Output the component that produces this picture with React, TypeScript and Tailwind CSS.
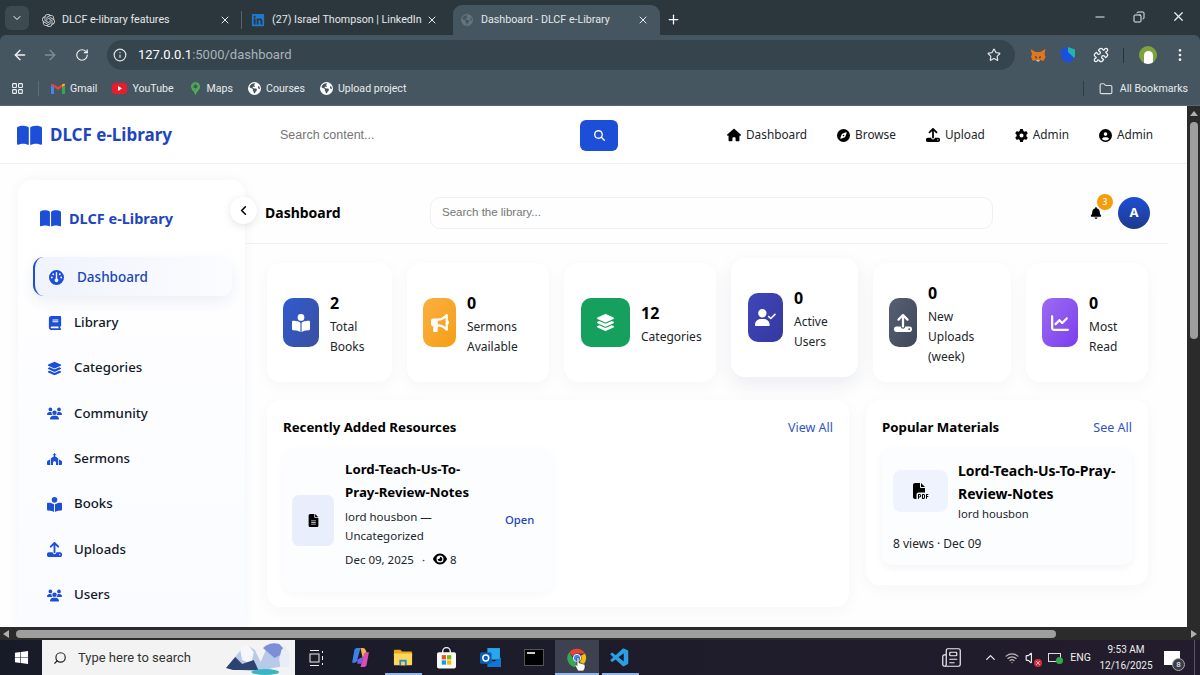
import type { ReactNode } from 'react';
import {
  ArrowLeft,
  ArrowRight,
  ChevronDown,
  ChevronLeft,
  ChevronUp,
  Copy,
  Folder,
  Info,
  LayoutGrid,
  Minus,
  MoreVertical,
  Newspaper,
  Plus,
  Puzzle,
  RotateCw,
  Search,
  Star,
  Volume,
  Wifi,
  X,
} from 'lucide-react';
import {
  FaBell,
  FaBook,
  FaBookOpen,
  FaBookOpenReader,
  FaBullhorn,
  FaChartLine,
  FaChurch,
  FaCircleUser,
  FaCompass,
  FaEarthAmericas,
  FaEye,
  FaFileLines,
  FaFilePdf,
  FaGauge,
  FaGear,
  FaHouse,
  FaLayerGroup,
  FaLinkedin,
  FaMagnifyingGlass,
  FaUpload,
  FaUserCheck,
  FaUsers,
  FaWindows,
} from 'react-icons/fa6';
import { SiGooglemaps, SiOpenai } from 'react-icons/si';
import { VscVscode } from 'react-icons/vsc';

function ChromeLogo({ size = 22 }: { size?: number }) {
  return (
    <svg width={size} height={size} viewBox="0 0 24 24">
      <path d="M12 2a10 10 0 0 1 8.66 5H12a5 5 0 0 0-4.6 3L3.6 5.8A10 10 0 0 1 12 2z" fill="#ea4335" />
      <path d="M20.66 7A10 10 0 0 1 12 22l4.3-7.5A5 5 0 0 0 16.3 9.5L20.66 7z" fill="#fbbc05" />
      <path d="M12 22A10 10 0 0 1 3.6 5.8l4.3 7.4A5 5 0 0 0 12 17h4.3L12 22z" fill="#34a853" />
      <circle cx="12" cy="12" r="4" fill="#4285f4" stroke="#fff" strokeWidth="1" />
    </svg>
  );
}

function GmailLogo() {
  return (
    <svg width="14" height="11" viewBox="0 0 14 11">
      <path d="M0 2v8a1 1 0 0 0 1 1h2V4z" fill="#4285f4" />
      <path d="M14 2v8a1 1 0 0 1-1 1h-2V4z" fill="#34a853" />
      <path d="M0 2l3 2 4 3 4-3 3-2a1.2 1.2 0 0 0-2-1L7 4 2 1a1.2 1.2 0 0 0-2 1z" fill="#ea4335" />
      <path d="M11 1.5V4l3-2a1.2 1.2 0 0 0-2-1z" fill="#fbbc05" />
    </svg>
  );
}

function YoutubeLogo() {
  return (
    <svg width="15" height="11" viewBox="0 0 15 11">
      <rect width="15" height="11" rx="3" fill="#ea1c2c" />
      <path d="M6 3l4 2.5L6 8z" fill="#fff" />
    </svg>
  );
}

function FoxLogo() {
  return (
    <svg width="16" height="15" viewBox="0 0 16 15">
      <path d="M0.5 1l5 3h5l5-3-1 5 1 3-2 4-3-1H6l-3 1-2-4 1-3z" fill="#e2761b" />
      <path d="M5 8l2 1-1 2zM11 8L9 9l1 2z" fill="#233447" />
      <path d="M6 12h4l-1 1.5H7z" fill="#d7c1b3" />
    </svg>
  );
}

function ShieldLogo() {
  return (
    <svg width="14" height="16" viewBox="0 0 14 16">
      <path d="M7 0l7 2.5V8c0 3.5-3 6.5-7 8-4-1.5-7-4.5-7-8V2.5z" fill="#1a4fe0" />
      <path d="M7 0l7 2.5V8c0 1-.3 2-.8 3L7 5z" fill="#26b5a5" />
    </svg>
  );
}

function ExplorerLogo() {
  return (
    <svg width="20" height="19" viewBox="0 0 22 19">
      <path d="M1 2a1 1 0 0 1 1-1h6l2 2h10a1 1 0 0 1 1 1v2H1z" fill="#e8a91c" />
      <rect x="1" y="5" width="20" height="13" rx="1" fill="#fbd75b" />
      <rect x="7" y="12" width="8" height="6" fill="#2b87d3" />
      <rect x="9" y="14" width="4" height="4" fill="#fbd75b" />
    </svg>
  );
}

function StoreLogo() {
  return (
    <svg width="19" height="22" viewBox="0 0 20 22">
      <path d="M6 6V4a4 4 0 0 1 8 0v2" fill="none" stroke="#e8e8e8" strokeWidth="1.5" />
      <rect y="5" width="20" height="17" rx="2" fill="#fafafa" />
      <rect x="5" y="8" width="4.5" height="4.5" fill="#f25022" />
      <rect x="10.5" y="8" width="4.5" height="4.5" fill="#7fba00" />
      <rect x="5" y="13.5" width="4.5" height="4.5" fill="#00a4ef" />
      <rect x="10.5" y="13.5" width="4.5" height="4.5" fill="#ffb900" />
    </svg>
  );
}

function OutlookLogo() {
  return (
    <svg width="21" height="21" viewBox="0 0 20 20">
      <path d="M7 1h12v11H7z" fill="#28a8ea" />
      <path d="M7 10l6 4 7-4v9H7z" fill="#0f78d4" />
      <rect y="5" width="11" height="11" rx="1.5" fill="#0a5fb5" />
      <circle cx="5.5" cy="10.5" r="2.8" fill="none" stroke="#fff" strokeWidth="1.4" />
    </svg>
  );
}

function CopilotLogo() {
  return (
    <svg width="19" height="21" viewBox="0 0 18 20">
      <path d="M5 1h4L6 12a3 3 0 0 1-3 3H1L3 4a3 3 0 0 1 2-3z" fill="#3b82e8" />
      <path d="M9 1h2a3 3 0 0 1 3 2l2 6-5 1z" fill="#f4b740" />
      <path d="M13 19H9l3-11a3 3 0 0 1 3-3h2l-2 11a3 3 0 0 1-2 3z" fill="#d94fb5" />
      <path d="M6 12l6-3-2 7H6z" fill="#7a5ce6" />
    </svg>
  );
}

function SearchArt() {
  return (
    <svg width="67" height="35" viewBox="0 0 58 35" preserveAspectRatio="none">
      <path d="M0 28L10 14 17 4 25 10 30 22 36 6 46 4 54 12 52 26 40 28 30 32 12 30z" fill="#b9c9e8" />
      <path d="M12 8L18 3 24 12 22 24 14 20z" fill="#f5f7fc" />
      <path d="M0 28L8 17 14 24 24 20 28 30H6z" fill="#2c4370" />
      <path d="M32 8a12 12 0 0 1 14-4l6 8-10 6z" fill="#7c8fd6" />
      <path d="M48 10l3-4 3 5 2 8-2 8h-7l-1-8z" fill="#e9edf7" />
      <ellipse cx="34" cy="32" rx="12" ry="3" fill="#39b6c6" />
    </svg>
  );
}

function TabItem({ icon, title, width, active }: { icon: ReactNode; title: string; width: string; active?: boolean }) {
  return (
    <div className={`h-[30px] flex items-center rounded-t-[9px] ${width} ${active ? 'bg-[#465660] pl-[6px] pr-[11px]' : 'pl-[8px] pr-[10px]'}`}>
      <span className="w-[16px] flex justify-center shrink-0">{icon}</span>
      <span className="ml-[6px] flex-1 truncate text-[10.7px] text-[#e4e8ea]">{title}</span>
      <X size={12} className="text-[#e8ecee] shrink-0" />
    </div>
  );
}

function TabStrip() {
  return (
    <div className="h-[35px] bg-[#2c373d] flex items-end shrink-0">
      <div className="w-[24px] h-[24px] ml-[5px] mb-[5px] rounded-[6px] bg-[#3d4a52] flex items-center justify-center shrink-0">
        <ChevronDown size={12} className="text-white" />
      </div>
      <TabItem width="w-[209px] ml-[3px]" icon={<SiOpenai size={13} className="text-[#d5d9db]" />} title="DLCF e-library features" />
      <div className="w-px h-[18px] bg-[#56636b] mb-[6px]" />
      <TabItem width="w-[206px]" icon={<FaLinkedin size={14} className="text-[#1f78c9]" />} title="(27) Israel Thompson | LinkedIn" />
      <TabItem width="w-[207px] ml-[5px]" active icon={<FaEarthAmericas size={12} className="text-[#65737b]" />} title="Dashboard - DLCF e-Library" />
      <Plus size={15} className="ml-[6px] mb-[8px] text-white" />
      <div className="flex-1" />
      <div className="flex items-center gap-[26px] mb-[11px] mr-[14px]">
        <Minus size={14} className="text-[#e8ecee]" />
        <Copy size={12} className="text-[#e8ecee] -scale-x-100" />
        <X size={15} className="text-[#e8ecee]" />
      </div>
    </div>
  );
}

function Toolbar() {
  return (
    <div className="h-[35px] bg-[#465660] rounded-t-[6px] flex items-center shrink-0 pl-[12px] pt-[5px]">
      <ArrowLeft size={16} className="text-[#eef1f2]" />
      <ArrowRight size={16} className="ml-[14px] text-[#7f8d95]" />
      <RotateCw size={14} className="ml-[17px] text-[#eef1f2]" />
      <div className="ml-[18px] w-[908px] h-[30px] rounded-full bg-[#36444d] flex items-center pl-[6px] shrink-0">
        <Info size={14} className="text-[#e4e8ea]" />
        <span className="ml-[11px] text-[13px] text-white">
          127.0.0.1<span className="text-[#a9b4ba]">:5000/dashboard</span>
        </span>
        <div className="flex-1" />
        <Star size={14} className="mr-[14px] text-[#e4e8ea]" />
      </div>
      <div className="ml-[15px] flex items-center">
        <FoxLogo />
        <span className="ml-[15px] flex"><ShieldLogo /></span>
        <Puzzle size={16} className="ml-[18px] text-[#f0f2f3]" />
        <div className="ml-[14px] w-px h-[15px] bg-[#26333a]" />
        <div className="ml-[15px] w-[18px] h-[18px] rounded-full bg-[#7da33a] flex items-center justify-center overflow-hidden">
          <div className="w-[9px] h-[13px] rounded-t-full bg-white mt-[4px]" />
        </div>
        <MoreVertical size={16} className="ml-[15px] text-[#f0f2f3]" />
      </div>
    </div>
  );
}

function Bookmark({ icon, label }: { icon: ReactNode; label: string }) {
  return (
    <div className="flex items-center gap-[5px] text-[10.6px] text-[#e8ecee]">
      {icon}
      <span>{label}</span>
    </div>
  );
}

function BookmarksBar() {
  return (
    <div className="h-[36px] bg-[#465660] flex items-center shrink-0 pl-[11px] pt-[2px] border-b border-[#5a6870]">
      <LayoutGrid size={13} className="text-[#eef1f2]" />
      <div className="ml-[14px] w-px h-[15px] bg-[#5f6d75]" />
      <div className="ml-[12px] flex items-center gap-[15px]">
        <Bookmark icon={<GmailLogo />} label="Gmail" />
        <Bookmark icon={<YoutubeLogo />} label="YouTube" />
        <Bookmark icon={<SiGooglemaps size={13} className="text-[#4caf50]" />} label="Maps" />
        <Bookmark icon={<FaEarthAmericas size={13} className="text-white" />} label="Courses" />
        <Bookmark icon={<FaEarthAmericas size={13} className="text-white" />} label="Upload project" />
      </div>
      <div className="flex-1" />
      <div className="w-px h-[15px] bg-[#2f3c44]" />
      <Folder size={14} className="ml-[15px] text-[#d8dde0]" />
      <span className="ml-[7px] mr-[12px] text-[10.6px] text-[#e8ecee]">All Bookmarks</span>
    </div>
  );
}

function NavLink({ icon, label }: { icon: ReactNode; label: string }) {
  return (
    <a className="flex items-center gap-[5px] text-[11.8px] text-[#212529]">
      {icon}
      <span>{label}</span>
    </a>
  );
}

function TopNav() {
  return (
    <div className="h-[58px] bg-white border-b border-[#efefef] flex items-center pl-[17px] pt-[1px] shrink-0">
      <div className="w-[263px] flex items-center gap-[8px] text-[#1d4ed8]">
        <FaBookOpen size={25} />
        <span className="text-[17px] font-bold text-[#1e45c0]">DLCF e-Library</span>
      </div>
      <div className="w-[300px] flex items-center">
        <span className="text-[12.5px] text-[#757575] font-['Liberation_Sans',sans-serif]">Search content...</span>
      </div>
      <div className="w-[38px] h-[31px] rounded-[6px] bg-[#1d4ed8] flex items-center justify-center">
        <FaMagnifyingGlass size={11} className="text-white" />
      </div>
      <div className="ml-[109px] flex items-center gap-[30px]">
        <NavLink icon={<FaHouse size={14} className="text-black" />} label="Dashboard" />
        <NavLink icon={<FaCompass size={13} className="text-black" />} label="Browse" />
        <NavLink icon={<FaUpload size={14} className="text-black" />} label="Upload" />
        <NavLink icon={<FaGear size={13} className="text-black" />} label="Admin" />
        <NavLink icon={<FaCircleUser size={13} className="text-black" />} label="Admin" />
      </div>
    </div>
  );
}

const sideItems = [
  { label: 'Library', icon: FaBook, size: 14 },
  { label: 'Categories', icon: FaLayerGroup, size: 15 },
  { label: 'Community', icon: FaUsers, size: 17 },
  { label: 'Sermons', icon: FaChurch, size: 16 },
  { label: 'Books', icon: FaBookOpenReader, size: 15 },
  { label: 'Uploads', icon: FaUpload, size: 15 },
  { label: 'Users', icon: FaUsers, size: 17 },
];

function Sidebar() {
  return (
    <aside className="w-[227px] shrink-0 h-full rounded-t-[14px] bg-gradient-to-b from-white to-[#fafbff] shadow-[0_0_12px_rgba(30,60,140,0.05)] pl-[15px] pr-[13px]">
      <div className="h-[77px] pl-[7px] flex items-center gap-[8px] text-[#1d4ed8]">
        <FaBookOpen size={21} />
        <span className="text-[14.5px] font-bold text-[#1e45c0]">DLCF e-Library</span>
      </div>
      <div className="h-[39px] flex items-center pl-[14px] pt-[1px] rounded-[11px] border-l-[2.5px] border-[#1d4ed8] bg-gradient-to-r from-[#f0f3fc] to-[#fbfcff] shadow-[0_6px_14px_rgba(30,60,140,0.07)]">
        <FaGauge size={15} className="text-[#1d4ed8]" />
        <span className="ml-[13px] text-[13.5px] font-medium text-[#2145b8]">Dashboard</span>
      </div>
      <nav className="mt-[4px]">
        {sideItems.map((item) => {
          const Icon = item.icon;
          return (
            <div key={item.label} className="h-[45.4px] flex items-center pl-[14px]">
              <span className="w-[15px] flex justify-center">
                <Icon size={item.size} className="text-[#1d4ed8]" />
              </span>
              <span className="ml-[12px] text-[13.25px] font-medium text-[#111827]">{item.label}</span>
            </div>
          );
        })}
      </nav>
    </aside>
  );
}

function DashHeader() {
  return (
    <div className="relative h-[64px] border-b border-[#f0f0f0] flex items-center pl-[20px] pt-[2px] shrink-0">
      <button className="absolute -left-[15px] top-[17px] w-[27px] h-[27px] rounded-full bg-white shadow-[0_2px_8px_rgba(0,0,0,0.1)] flex items-center justify-center">
        <ChevronLeft size={15} strokeWidth={2.6} className="text-black" />
      </button>
      <h1 className="w-[165px] text-[14px] font-bold text-black">Dashboard</h1>
      <div className="w-[563px] h-[32px] rounded-[10px] border border-[#f0f0f0] flex items-center pl-[11px]">
        <span className="text-[11.5px] text-[#757575] font-['Liberation_Sans',sans-serif]">Search the library...</span>
      </div>
      <div className="relative ml-[97px]">
        <FaBell size={12} className="text-black" />
        <span className="absolute -top-[13px] left-[7px] w-[16px] h-[16px] rounded-full bg-[#f59e0b] text-white text-[8px] font-medium flex items-center justify-center">3</span>
      </div>
      <div className="ml-[16px] w-[32px] h-[32px] rounded-full bg-gradient-to-b from-[#1d4ed8] to-[#1e3a8a] flex items-center justify-center text-white text-[13px] font-bold">A</div>
    </div>
  );
}

function StatCard({ icon, value, label, cardW, iconW, iconBg, raised }: {
  icon: ReactNode; value: string; label: ReactNode; cardW: string; iconW: string; iconBg: string; raised?: boolean;
}) {
  return (
    <div className={`h-[119px] rounded-[14px] bg-white flex items-center shrink-0 ${cardW} ${raised ? '-translate-y-[5px] shadow-[0_8px_20px_rgba(30,40,90,0.08)]' : 'shadow-[0_4px_16px_rgba(30,40,90,0.04)]'}`}>
      <div className={`h-[49px] rounded-[10px] flex items-center justify-center text-white shrink-0 ${iconW} ${iconBg}`}>
        {icon}
      </div>
      <div className="ml-[11px] pt-[2px]">
        <div className="text-[16px] leading-[27px] font-bold text-black">{value}</div>
        <div className="text-[12px] leading-[20px] text-[#212529]">{label}</div>
      </div>
    </div>
  );
}

function StatRow() {
  return (
    <div className="flex gap-[15px]">
      <StatCard cardW="w-[125px] pl-[16px]" iconW="w-[36px]" iconBg="bg-gradient-to-br from-[#2f5bd0] to-[#3a4f9f]" icon={<FaBookOpenReader size={18} />} value="2" label={<>Total<br />Books</>} />
      <StatCard cardW="w-[142px] pl-[16px]" iconW="w-[33px]" iconBg="bg-gradient-to-br from-[#fbb040] to-[#f59e0b]" icon={<FaBullhorn size={18} />} value="0" label={<>Sermons<br />Available</>} />
      <StatCard cardW="w-[152px] pl-[17px]" iconW="w-[49px]" iconBg="bg-[#16a05d]" icon={<FaLayerGroup size={19} />} value="12" label="Categories" />
      <StatCard raised cardW="w-[127px] pl-[17px]" iconW="w-[35px]" iconBg="bg-gradient-to-br from-[#3f46b8] to-[#3538a0]" icon={<FaUserCheck size={21} />} value="0" label={<>Active<br />Users</>} />
      <StatCard cardW="w-[138px] pl-[16px]" iconW="w-[28px]" iconBg="bg-gradient-to-br from-[#566074] to-[#3f4859]" icon={<FaUpload size={18} />} value="0" label={<>New<br />Uploads<br />(week)</>} />
      <StatCard cardW="w-[122px] pl-[16px]" iconW="w-[36px]" iconBg="bg-gradient-to-br from-[#9b6cf2] to-[#7c3aed]" icon={<FaChartLine size={18} />} value="0" label={<>Most<br />Read</>} />
    </div>
  );
}

function RecentPanel() {
  return (
    <section className="w-[582px] h-[207px] shrink-0 rounded-[14px] bg-white shadow-[0_4px_16px_rgba(30,40,90,0.04)] px-[16px] pt-[18px]">
      <div className="flex items-center justify-between h-[20px]">
        <h2 className="text-[13.25px] font-bold text-black">Recently Added Resources</h2>
        <a className="text-[12.5px] text-[#2f55c4]">View All</a>
      </div>
      <div className="mt-[10px] w-[270px] h-[144px] rounded-[12px] bg-[#fcfdff] shadow-[0_3px_10px_rgba(30,40,90,0.03)] flex items-center pl-[9px]">
        <div className="w-[42px] h-[51px] rounded-[7px] bg-[#e8eefb] flex items-center justify-center shrink-0">
          <FaFileLines size={13} className="text-black" />
        </div>
        <div className="ml-[11px] w-[150px] mb-[14px]">
          <div className="text-[13.25px] leading-[23px] font-bold text-black">Lord-Teach-Us-To-<br />Pray-Review-Notes</div>
          <div className="mt-[3px] text-[11.5px] leading-[19px] text-[#212529]">lord housbon —<br />Uncategorized</div>
          <div className="mt-[5px] flex items-center text-[11.5px] leading-[19px] text-[#212529]">
            <span>Dec 09, 2025</span>
            <span className="mx-[8px]">·</span>
            <FaEye size={14} className="text-black mr-[3px]" />
            <span>8</span>
          </div>
        </div>
        <a className="ml-[10px] text-[11.25px] font-medium text-[#1e45c0]">Open</a>
      </div>
    </section>
  );
}

function PopularPanel() {
  return (
    <section className="w-[282px] h-[185px] shrink-0 rounded-[14px] bg-white shadow-[0_4px_16px_rgba(30,40,90,0.04)] px-[16px] pt-[18px]">
      <div className="flex items-center justify-between h-[20px]">
        <h2 className="text-[13.25px] font-bold text-black">Popular Materials</h2>
        <a className="text-[12.5px] text-[#2f55c4]">See All</a>
      </div>
      <div className="mt-[10px] h-[117px] rounded-[10px] bg-[#fcfdff] shadow-[0_3px_8px_rgba(30,40,90,0.05)] pl-[11px] pt-[12px]">
        <div className="flex">
          <div className="w-[55px] h-[42px] mt-[10px] rounded-[8px] bg-[#eef3fe] flex items-center justify-center shrink-0">
            <FaFilePdf size={16} className="text-black" />
          </div>
          <div className="ml-[10px]">
            <div className="text-[14px] leading-[22.5px] font-bold text-black">Lord-Teach-Us-To-Pray-<br />Review-Notes</div>
            <div className="text-[11.25px] leading-[18px] text-[#212529]">lord housbon</div>
          </div>
        </div>
        <div className="mt-[11px] text-[12px] leading-[19px] text-[#212529]">8 views · Dec 09</div>
      </div>
    </section>
  );
}

function MainArea() {
  return (
    <div className="flex-1 min-w-0 h-full">
      <DashHeader />
      <div className="pl-[22px] pr-[20px] pt-[19px]">
        <StatRow />
        <div className="mt-[18px] flex items-start gap-[17px]">
          <RecentPanel />
          <PopularPanel />
        </div>
      </div>
    </div>
  );
}

function VScrollbar() {
  return (
    <div className="w-[13px] bg-[#2b2b2b] flex flex-col items-center shrink-0">
      <span className="mt-[5px] w-0 h-0 border-x-[4px] border-x-transparent border-b-[5px] border-b-[#b0b0b0]" />
      <div className="mt-[6px] w-[8px] h-[217px] rounded-full bg-[#9e9e9e]" />
    </div>
  );
}

function HScrollbar() {
  return (
    <div className="h-[13px] bg-[#2b2b2b] flex items-center shrink-0 pl-[3px] pr-[3px]">
      <span className="w-0 h-0 border-y-[4px] border-y-transparent border-r-[6px] border-r-[#b0b0b0]" />
      <div className="ml-[7px] w-[1040px] h-[8px] rounded-full bg-[#9e9e9e]" />
      <div className="flex-1" />
      <span className="w-0 h-0 border-y-[4px] border-y-transparent border-l-[6px] border-l-[#b0b0b0]" />
    </div>
  );
}

function TaskIcon({ children, active, underline }: { children: ReactNode; active?: boolean; underline?: boolean }) {
  return (
    <div className={`relative w-[43.4px] h-[35px] flex items-center justify-center ${active ? 'bg-[#3e4250]' : ''}`}>
      {children}
      {underline && <span className={`absolute bottom-0 h-[2px] bg-[#8fb8e8] ${active ? 'left-0 right-0' : 'left-[3px] right-[3px]'}`} />}
    </div>
  );
}

function Taskbar() {
  return (
    <div className="h-[35px] bg-gradient-to-r from-[#171b28] to-[#231c2c] flex items-center shrink-0 font-['Roboto',sans-serif]">
      <div className="w-[42px] flex justify-center">
        <FaWindows size={15} className="text-white" />
      </div>
      <div className="w-[253px] h-[35px] bg-[#f3f3f3] flex items-center pl-[11px] overflow-hidden shrink-0">
        <Search size={14} className="text-[#222] -scale-x-100" />
        <span className="ml-[11px] flex-1 text-[13px] text-[#333]">Type here to search</span>
        <span className="mr-[2px] flex"><SearchArt /></span>
      </div>
      <div className="flex">
        <TaskIcon>
          <svg width="16" height="16" viewBox="0 0 16 16" fill="none" stroke="#eee" strokeWidth="1">
            <path d="M1 .5h9M1 15.5h9" />
            <rect x="1" y="4" width="9" height="8" />
            <path d="M13.5 1v2M13.5 6v4M13.5 13v2" />
          </svg>
        </TaskIcon>
        <TaskIcon><CopilotLogo /></TaskIcon>
        <TaskIcon underline><ExplorerLogo /></TaskIcon>
        <TaskIcon><StoreLogo /></TaskIcon>
        <TaskIcon><OutlookLogo /></TaskIcon>
        <TaskIcon>
          <div className="w-[20px] h-[17px] bg-black border border-[#555] pl-[2px] pt-[2px]">
            <div className="w-[8px] h-[2px] bg-[#ccc]" />
          </div>
        </TaskIcon>
        <TaskIcon active underline>
          <ChromeLogo />
          <svg className="absolute left-[20px] top-[17px]" width="11" height="14" viewBox="0 0 11 14">
            <path d="M2 1.5a1 1 0 0 1 2 0V6h1l5 1.5V11l-1.5 3H3L0 8.5l1-1L2 8.5z" fill="#fff" stroke="#222" strokeWidth=".6" />
          </svg>
        </TaskIcon>
        <TaskIcon underline><VscVscode size={22} className="text-[#2a9fe6]" /></TaskIcon>
      </div>
      <div className="flex-1" />
      <div className="flex items-center text-[#eee]">
        <Newspaper size={21} strokeWidth={1.4} />
        <ChevronUp size={15} className="ml-[21px]" />
        <Wifi size={14} className="ml-[7px] text-[#bbb]" />
        <span className="relative ml-[6px] flex">
          <Volume size={14} />
          <span className="absolute -right-[3px] -bottom-[2px] w-[8px] h-[8px] rounded-full bg-[#e02b3a] flex items-center justify-center">
            <X size={6} strokeWidth={3} className="text-white" />
          </span>
        </span>
        <span className="relative ml-[9px] w-[13px] h-[9px] border border-[#ddd]">
          <span className="absolute -right-[3px] -bottom-[3px] w-[7px] h-[7px] rounded-full bg-[#37a84a]" />
        </span>
        <span className="ml-[9px] w-[21px] text-center text-[10.5px]">ENG</span>
        <div className="ml-[6px] w-[58px] text-center text-[10px] leading-[16px]">
          9:53 AM<br />12/16/2025
        </div>
        <span className="relative ml-[9px] w-[16px] h-[14px] bg-white">
          <span className="absolute -right-[5px] -bottom-[6px] w-[13px] h-[13px] rounded-full bg-[#3a3d48] border border-[#aaa] text-[8px] leading-[11px] text-center text-white">8</span>
        </span>
        <span className="ml-[14px] mr-[5px] w-px h-[35px] bg-[#55586a]" />
      </div>
    </div>
  );
}

export default function App() {
  return (
    <div className="h-screen w-full overflow-hidden flex flex-col bg-white font-['Noto_Sans',sans-serif]">
      <div className="font-['Roboto',sans-serif] flex flex-col shrink-0 bg-[#2c373d]">
        <TabStrip />
        <Toolbar />
        <BookmarksBar />
      </div>
      <div className="flex-1 min-h-0 flex">
        <div className="flex-1 min-w-0 flex flex-col bg-[#fefefe]">
          <TopNav />
          <div className="flex-1 min-h-0 overflow-hidden flex pl-[18px] pr-[19px] pt-[16px]">
            <Sidebar />
            <MainArea />
          </div>
        </div>
        <VScrollbar />
      </div>
      <HScrollbar />
      <Taskbar />
    </div>
  );
}
